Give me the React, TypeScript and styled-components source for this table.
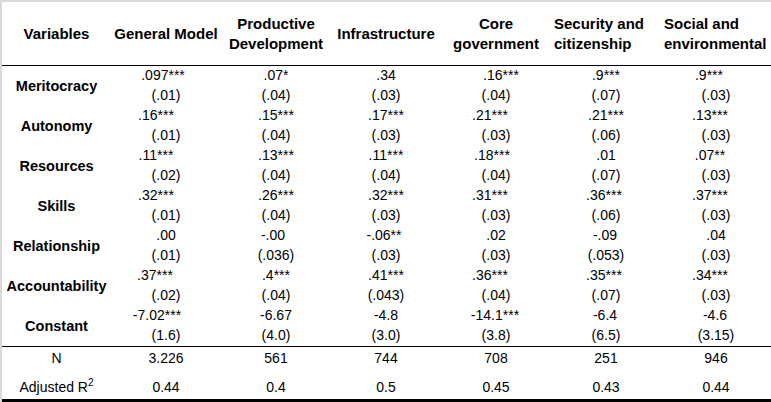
import styled, { createGlobalStyle } from "styled-components";

const GlobalStyle = createGlobalStyle`
  html, body {
    margin: 0;
    padding: 0;
    background: #fff;
  }
  body {
    font-family: "Liberation Sans", Arial, sans-serif;
    color: #000;
  }
`;

type Cell = [string, string, number];

type Row = {
  label: string;
  cells: Cell[];
};

const headers: { text: string[]; align?: "left" }[] = [
  { text: ["General Model"] },
  { text: ["Productive", "Development"] },
  { text: ["Infrastructure"] },
  { text: ["Core", "government"] },
  { text: ["Security and", "citizenship"], align: "left" },
  { text: ["Social and", "environmental"], align: "left" },
];

// third value = how far the coefficient sits off the column centre
const rows: Row[] = [
  {
    label: "Meritocracy",
    cells: [
      [".097***", "(.01)", -3],
      [".07*", "(.04)", 0],
      [".34", "(.03)", 0],
      [".16***", "(.04)", 5],
      [".9***", "(.07)", 0],
      [".9***", "(.03)", -7],
    ],
  },
  {
    label: "Autonomy",
    cells: [
      [".16***", "(.01)", -10],
      [".15***", "(.04)", 0],
      [".17***", "(.03)", 0],
      [".21***", "(.03)", -6],
      [".21***", "(.06)", 0],
      [".13***", "(.03)", -6],
    ],
  },
  {
    label: "Resources",
    cells: [
      [".11***", "(.02)", -10],
      [".13***", "(.04)", 0],
      [".11***", "(.04)", 0],
      [".18***", "(.04)", -4],
      [".01", "(.07)", 0],
      [".07**", "(.03)", -6],
    ],
  },
  {
    label: "Skills",
    cells: [
      [".32***", "(.01)", -10],
      [".26***", "(.04)", 0],
      [".32***", "(.03)", 0],
      [".31***", "(.03)", -6],
      [".36***", "(.06)", -2],
      [".37***", "(.03)", -6],
    ],
  },
  {
    label: "Relationship",
    cells: [
      [".00", "(.01)", 0],
      ["-.00", "(.036)", -3],
      ["-.06**", "(.03)", -2],
      [".02", "(.03)", 0],
      ["-.09", "(.053)", -1],
      [".04", "(.03)", 0],
    ],
  },
  {
    label: "Accountability",
    cells: [
      [".37***", "(.02)", -11],
      [".4***", "(.04)", 0],
      [".41***", "(.043)", 0],
      [".36***", "(.04)", -6],
      [".35***", "(.07)", -2],
      [".34***", "(.03)", -6],
    ],
  },
  {
    label: "Constant",
    cells: [
      ["-7.02***", "(1.6)", -9],
      ["-6.67", "(4.0)", 0],
      ["-4.8", "(3.0)", 0],
      ["-14.1***", "(3.8)", -1],
      ["-6.4", "(6.5)", -1],
      ["-4.6", "(3.15)", -1],
    ],
  },
];

const nValues = ["3.226", "561", "744", "708", "251", "946"];
const r2Values = ["0.44", "0.4", "0.5", "0.45", "0.43", "0.44"];

const Frame = styled.div`
  width: 771px;
  height: 402px;
  box-sizing: border-box;
  border-top: 2px solid #d9d9d9;
  border-left: 2px solid #d9d9d9;
  background: #fff;
`;

const Grid = styled.div`
  display: grid;
  grid-template-columns: 109px repeat(6, 110px);
`;

const HeadRow = styled(Grid)`
  height: 63px;
  border-bottom: 1px solid #000;
`;

const HeadCell = styled.div<{ $align?: "left" }>`
  display: flex;
  flex-direction: column;
  justify-content: center;
  align-items: ${(p) => (p.$align === "left" ? "flex-start" : "center")};
  padding-left: ${(p) => (p.$align === "left" ? "3px" : "0")};
  font-size: 15px;
  font-weight: bold;
  line-height: 20px;
  white-space: nowrap;
`;

const BodyRow = styled(Grid)`
  height: 40px;
`;

const Label = styled.div`
  display: flex;
  align-items: center;
  justify-content: center;
  font-size: 14.5px;
  font-weight: bold;
  white-space: nowrap;
`;

const Value = styled.div`
  display: flex;
  flex-direction: column;
  align-items: center;
  font-size: 14px;
  white-space: nowrap;
`;

const Coef = styled.span<{ $shift: number }>`
  line-height: 19px;
  padding-left: ${(p) => (p.$shift > 0 ? p.$shift * 2 : 0)}px;
  padding-right: ${(p) => (p.$shift < 0 ? -p.$shift * 2 : 0)}px;
`;

const StdErr = styled.span`
  line-height: 21px;
`;

const Footer = styled.div`
  border-top: 1px solid #000;
  border-bottom: 3px solid #000;
`;

const FootRow = styled(Grid)<{ $top: number }>`
  height: 26px;
  box-sizing: border-box;
  padding-top: ${(p) => p.$top}px;
  font-size: 14px;
  line-height: 20px;
  text-align: center;
`;

const Sup = styled.sup`
  font-size: 10px;
  vertical-align: 6px;
  line-height: 0;
`;

export default function App() {
  return (
    <>
      <GlobalStyle />
      <Frame>
        <HeadRow>
          <HeadCell>Variables</HeadCell>
          {headers.map((h, i) => (
            <HeadCell key={i} $align={h.align}>
              {h.text.map((t) => (
                <span key={t}>{t}</span>
              ))}
            </HeadCell>
          ))}
        </HeadRow>
        {rows.map((row) => (
          <BodyRow key={row.label}>
            <Label>{row.label}</Label>
            {row.cells.map(([coef, se, shift], i) => (
              <Value key={i}>
                <Coef $shift={shift}>{coef}</Coef>
                <StdErr>{se}</StdErr>
              </Value>
            ))}
          </BodyRow>
        ))}
        <Footer>
          <FootRow $top={1}>
            <div>N</div>
            {nValues.map((v, i) => (
              <div key={i}>{v}</div>
            ))}
          </FootRow>
          <FootRow $top={4}>
            <div>
              Adjusted R<Sup>2</Sup>
            </div>
            {r2Values.map((v, i) => (
              <div key={i}>{v}</div>
            ))}
          </FootRow>
        </Footer>
      </Frame>
    </>
  );
}
